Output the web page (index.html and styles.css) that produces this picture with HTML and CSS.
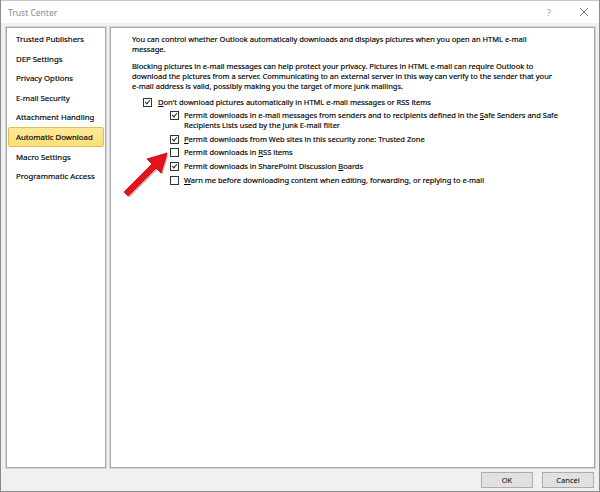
FILE: index.html
```html
<!DOCTYPE html>
<html lang="en">
<head>
    <meta charset="UTF-8">
    <title>Trust Center</title>
    <link rel="stylesheet" href="styles.css">
</head>
<body>
    <div class="window">
        <div class="titlebar">
            <span class="title">Trust Center</span>
            <span class="title-buttons">
                <span class="help">?</span>
                <svg class="close" width="10" height="10" viewBox="0 0 10 10">
                    <path d="M1 1 L9 9 M9 1 L1 9" stroke="#777" stroke-width="1" fill="none"/>
                </svg>
            </span>
        </div>
        <div class="panes">
            <ul class="nav">
                <li>Trusted Publishers</li>
                <li>DEP Settings</li>
                <li>Privacy Options</li>
                <li>E-mail Security</li>
                <li>Attachment Handling</li>
                <li class="selected">Automatic Download</li>
                <li>Macro Settings</li>
                <li>Programmatic Access</li>
            </ul>
            <div class="content">
                <p>You can control whether Outlook automatically downloads and displays pictures when you open an HTML e-mail<br>message.</p>
                <p>Blocking pictures in e-mail messages can help protect your privacy. Pictures in HTML e-mail can require Outlook to<br>download the pictures from a server. Communicating to an external server in this way can verify to the sender that your<br>e-mail address is valid, possibly making you the target of more junk mailings.</p>
                <div class="options">
                    <label class="option"><span class="box checked"></span><span><u>D</u>on't download pictures automatically in HTML e-mail messages or RSS items</span></label>
                    <div class="sub">
                        <label class="option"><span class="box checked"></span><span>Permit downloads in e-mail messages from senders and to recipients defined in the <u>S</u>afe Senders and Safe<br>Recipients Lists used by the Junk E-mail filter</span></label>
                        <label class="option"><span class="box checked"></span><span><u>P</u>ermit downloads from Web sites in this security zone: Trusted Zone</span></label>
                        <label class="option"><span class="box"></span><span>Permit downloads in <u>R</u>SS items</span></label>
                        <label class="option"><span class="box checked"></span><span>Permit downloads in SharePoint Discussion <u>B</u>oards</span></label>
                        <label class="option"><span class="box"></span><span><u>W</u>arn me before downloading content when editing, forwarding, or replying to e-mail</span></label>
                    </div>
                </div>
            </div>
        </div>
        <div class="footer">
            <button>OK</button>
            <button>Cancel</button>
        </div>
        <svg class="arrow" width="70" height="70" viewBox="0 0 70 70">
            <path d="M8 52 L36 24 L31 19 L51 13 L45 33 L40 28 L12 56 Z" fill="#8a0000" opacity="0.35" transform="translate(1.5 1.5)"/>
            <path d="M8 52 L36 24 L31 19 L51 13 L45 33 L40 28 L12 56 Z" fill="#e3141b" stroke="#c00000" stroke-width="0.8" stroke-linejoin="round"/>
        </svg>
    </div>
</body>
</html>
```

FILE: styles.css
```css
* {
    box-sizing: border-box;
}
body {
    margin: 0;
    font-family: "Noto Sans", Arial, sans-serif;
    font-size: 7.5px;
    color: #000;
}
.window {
    position: relative;
    width: 600px;
    height: 492px;
    background: #f0f0f0;
    border: 1px solid #8c8c8c;
    border-top: none;
    display: flex;
    flex-direction: column;
}
.titlebar {
    height: 23px;
    background: #fff;
    display: flex;
    align-items: center;
    justify-content: space-between;
    padding: 0 6px 0 7px;
    border-top: 1px solid #c8c8c8;
}
.title {
    color: #888;
    font-size: 8.5px;
}
.title-buttons {
    display: flex;
    align-items: center;
    gap: 28px;
}
.help {
    color: #999;
    font-size: 9px;
}
.close {
    margin-right: 4px;
}
.panes {
    display: flex;
    gap: 4px;
    padding: 4px 4px 0 5px;
    height: 445px;
}
.nav {
    list-style: none;
    margin: 0;
    padding: 1px 1px;
    width: 100px;
    background: #fff;
    border: 1px solid #a9a9a9;
    box-shadow: 0 0 0 1px #d4d4d4;
    font-size: 7.8px;
}
.nav li {
    height: 19.6px;
    line-height: 18px;
    padding-left: 7px;
    border: 1px solid transparent;
    border-radius: 2px;
    white-space: nowrap;
    -webkit-text-stroke: 0.15px #000;
}
.nav li.selected {
    background: linear-gradient(#fde99a, #fcdf76);
    border-color: #e2bd55;
}
.content {
    flex: 1;
    background: #fff;
    border: 1px solid #a9a9a9;
    box-shadow: 0 0 0 1px #d4d4d4;
    padding: 6px 10px 0 21px;
    -webkit-text-stroke: 0.15px #000;
}
.content p {
    margin: 0 0 6.5px;
    line-height: 10px;
}
.options {
    padding-left: 11px;
    margin-top: 7px;
}
.option {
    display: flex;
    align-items: flex-start;
    gap: 6px;
    line-height: 9.5px;
    margin-bottom: 4.3px;
}
.sub {
    padding-left: 27px;
}
.sub .option {
    gap: 5px;
}
.box {
    flex: none;
    width: 9px;
    height: 9px;
    border: 1px solid #333;
    background: #fff;
    position: relative;
}
.box.checked::after {
    content: "";
    position: absolute;
    left: 2px;
    top: 0;
    width: 2px;
    height: 4px;
    border: solid #222;
    border-width: 0 1px 1px 0;
    transform: rotate(40deg);
}
u {
    text-decoration-thickness: 1px;
    text-underline-offset: 1px;
}
.footer {
    display: flex;
    justify-content: flex-end;
    gap: 9px;
    padding: 4px 5px 0;
}
.footer button {
    width: 52px;
    height: 16px;
    font-family: inherit;
    font-size: 7.5px;
    color: #000;
    background: #e1e1e1;
    border: 1px solid #adadad;
    padding: 0;
}
.arrow {
    position: absolute;
    left: 115px;
    top: 140px;
}
```
